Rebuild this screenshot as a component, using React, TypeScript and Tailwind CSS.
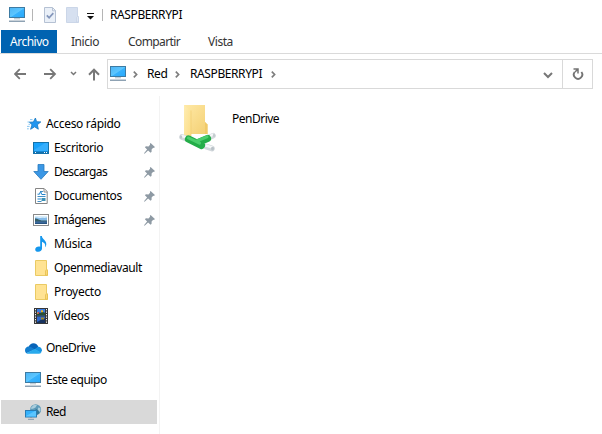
import type { ReactNode } from "react";

function Monitor() {
  return (
    <svg width="17" height="16" viewBox="0 0 17 16" className="shrink-0">
      <defs>
        <linearGradient id="screen" x1="0" y1="0" x2="1" y2="1">
          <stop offset="0" stopColor="#4cb4f5" />
          <stop offset="0.5" stopColor="#5cc6ff" />
          <stop offset="0.55" stopColor="#38b2fd" />
          <stop offset="1" stopColor="#27a9fc" />
        </linearGradient>
      </defs>
      <rect x="0.5" y="0.5" width="15" height="10" fill="url(#screen)" stroke="#3d7ba3" />
      <rect x="5" y="11.3" width="6" height="1" fill="#a9b9c6" />
      <rect x="0" y="13" width="16" height="1" fill="#c9d2da" />
      <rect x="0" y="14" width="16" height="1" fill="#8ea2b3" />
    </svg>
  );
}

function Star() {
  return (
    <svg width="15" height="14" viewBox="0 0 15 14" className="ml-[2px]">
      <path d="M8.4 1 9.6 4.7l4.2.2-3.4 2.8.9 4.5-3.7-2.4-4 2.5 1.4-4.6-2.6-2.5 4-.2z" fill="#2196f0" stroke="#1879c0" strokeWidth="0.8" />
      <path d="M3 2.6h2.5M0.5 5h2M1.5 7.3h1.6M0 9.4h2.6M0 11.8h1.8" stroke="#68b8ed" strokeWidth="0.8" />
    </svg>
  );
}

function Desktop() {
  return (
    <svg width="16" height="12" viewBox="0 0 16 12">
      <rect x="0.5" y="0.5" width="15" height="11" fill="#18a2fb" stroke="#1472ab" />
      <path d="M1 8 12 1h3v8H1z" fill="#35aefd" />
      <rect x="1" y="9.5" width="14" height="1.5" fill="#126fac" />
      <path d="M2 10.5h1M11 10.5h1M13 10.5h1" stroke="#fff" />
    </svg>
  );
}

function Download() {
  return (
    <svg width="16" height="16" viewBox="0 0 16 16">
      <path d="M5 .5h6v7h4.2L8 15.3.8 7.5H5z" fill="#3b97e5" stroke="#2778bd" strokeWidth="0.8" />
    </svg>
  );
}

function Doc() {
  return (
    <svg width="13" height="16" viewBox="0 0 13 16">
      <path d="M.5.5h8.7l3 3v12H.5z" fill="#fff" stroke="#858585" />
      <path d="M9 1v3h3" fill="none" stroke="#858585" strokeWidth="0.9" />
      <path d="M5 3.5h3M2.5 8.5h8M2.5 13.5h4" stroke="#438fc5" />
      <path d="M2.5 6.2h2l.6-2h1l.5 2.3M7 6.5h3.5M2.5 11h3.5" fill="none" stroke="#2385cd" />
      <rect x="6.5" y="10" width="4" height="3" fill="#3c91b6" />
    </svg>
  );
}

function Picture() {
  return (
    <svg width="16" height="12" viewBox="0 0 16 12">
      <rect x="0.5" y="0.5" width="15" height="11" fill="#fff" stroke="#8a8a8a" />
      <rect x="2" y="2" width="12" height="8" fill="#86bce9" />
      <path d="M2 3.4c3 0 4 1 6 .6s3 .2 6-.4V2H2z" fill="#d8edfa" />
      <path d="M2 4.5c2-.4 4.4 1.7 6.5 1.9l5.5.2V8H2z" fill="#355d67" />
      <path d="M2 7.5h12V10H2z" fill="#416fa8" />
      <path d="M2 9c3-1 6 .6 12-.6V10H2z" fill="#28537f" />
    </svg>
  );
}

function Music() {
  return (
    <svg width="12" height="16" viewBox="0 0 12 16">
      <path d="M5.2 0h1.7c.1 3.3 4.6 4.2 4.4 8.2-.1 1.3-.6 2.4-1.3 3.1.8-2.8-.3-4.4-3-5.5v6.7C7 14.4 5.5 15.8 3.3 15.8c-2 0-3.1-1-3.1-2.4 0-1.8 1.7-3 3.7-3 .5 0 .9.1 1.3.3z" fill="#1597ed" />
    </svg>
  );
}

function Folder() {
  return (
    <svg width="13" height="16" viewBox="0 0 13 16">
      <path d="M.5.5h11v9.3h1v5.7H.5z" fill="#ffe393" stroke="#eaca63" />
      <path d="M10.5 15.2v-4.4l1-1 1 1v4.4z" fill="#fbd87a" stroke="#e5bf4e" strokeWidth="0.8" />
    </svg>
  );
}

function Film() {
  return (
    <svg width="14" height="16" viewBox="0 0 14 16">
      <rect width="14" height="16" fill="#37383a" />
      <rect x="3" y="1" width="8" height="6.5" fill="#397ce0" />
      <rect x="3" y="8.5" width="8" height="6.5" fill="#2f68ca" />
      <path d="M3 5.8c2.5-2 3.5 0 5-2l3 1v2.7H3z" fill="#294e35" />
      <path d="M7 2.2h2v2H7zM3 4.5h2v1.2H3z" fill="#edb325" />
      <path d="M4 4h1v2H4z" fill="#ce405c" />
      <path d="M3 14c3-1 4-3 8-3.5V15H3z" fill="#17325e" />
      <path d="M7 9.5h3v2H7z" fill="#a48b2e" />
      <path d="M1.5 1v15M12.5 1v15" stroke="#f4f4f4" strokeDasharray="1.3 1.2" />
    </svg>
  );
}

function Cloud() {
  return (
    <svg width="17" height="11" viewBox="0 0 17 11">
      <path d="M3.6 4C4.6 1.4 6.3.2 8.4.2c2.4 0 4.3 1.5 5 3.7L9 7.5z" fill="#0864b8" />
      <path d="M3.7 3.5C1.5 3.6 0 5.2 0 7.3c0 1.3.6 2.3 1.4 3L10 6.5 6.4 4.3c-.8-.5-1.7-.8-2.7-.8z" fill="#137dce" />
      <path d="M9.5 6.2 13 3.8c2.3 0 4 1.6 4 3.6L15.8 10z" fill="#1591df" />
      <path d="M1.3 10.2 9.6 6.1l6.8 3.5c-.6.8-1.5 1.2-2.6 1.2H3.6c-.9 0-1.7-.2-2.3-.6z" fill="#28aaed" />
    </svg>
  );
}

function Network() {
  return (
    <svg width="17" height="16" viewBox="0 0 17 16">
      <circle cx="10.6" cy="5.7" r="5.5" fill="#5d9ab8" />
      <path d="M6.2 3.4 9 .8l3 .2-1.5 2.4-2.6 1.3H6zM13.2 3.5l2 .5.4 2.5-1.6 1.4-1.4-1.4z" fill="#a9cddc" />
      <path d="m10.5 4.6 3 2 1 2.4-1.6 1.5h-2z" fill="#357897" />
      <rect x="0.5" y="6.5" width="11" height="6.5" fill="#34b1fb" stroke="#297bb2" />
      <path d="M1 12 10 7h1v5.5H1z" fill="#5bc5ff" />
      <path d="M5 13.5h2M3 15.3h6" stroke="#8198aa" />
    </svg>
  );
}

function Pin() {
  return (
    <svg width="11" height="11" viewBox="0 0 11 11" className="absolute left-[144px] top-[7px]">
      <path d="M6.6 0 10.9 4.1 10 5l-.8-.2L7.6 6.4v2.4l-1 1L4.1 7.4.6 10.7 0 10.3l3.1-3.9L.9 4.2l1-1 2.6.2L6.1 1.8 5.9.8z" fill="#8e9aa4" />
    </svg>
  );
}

function Crumb() {
  return (
    <svg width="5" height="7" viewBox="0 0 5 7" className="shrink-0">
      <path d="m.8.7 2.8 2.8L.8 6.3" fill="none" stroke="#7d7d7d" strokeWidth="1.7" />
    </svg>
  );
}

function Drive() {
  return (
    <svg width="38" height="48" viewBox="0 0 38 48">
      <defs>
        <linearGradient id="folderFront" x1="0" y1="0" x2="1" y2="1">
          <stop stopColor="#ffedb2" />
          <stop offset="1" stopColor="#fbdc84" />
        </linearGradient>
        <linearGradient id="folderBack" x1="0" y1="0" x2="1" y2="1">
          <stop stopColor="#ffe9a6" />
          <stop offset="1" stopColor="#f3cf72" />
        </linearGradient>
      </defs>
      <path d="M5 1h21v17l2.5 2.5V30H5z" fill="url(#folderBack)" />
      <path d="M26 18v12h2.5v-9.5z" fill="#f0c968" />
      <path d="m5 1 7 5.5V35l-7-4z" fill="url(#folderFront)" />
      <path d="M12 6.5V32" stroke="#efcb70" strokeWidth="0.7" />
      <path d="m3 33 5 1.8M29 34l5-2.3M27 42.5l6 2" stroke="#d3d8dc" strokeWidth="5.6" strokeLinecap="round" />
      <path d="m3 32 5 1.6M29 33l5-2.3M27 41.5l6 1.8" stroke="#f5f7f8" strokeWidth="2.4" strokeLinecap="round" />
      <path d="m9.500 35 13 6.500M19 38.500 28.500 34.500" stroke="#24ad49" strokeWidth="7.2" fill="none" strokeLinecap="round" />
      <path d="m9.500 34 11 5.200M18 36.800 28 32.800" stroke="#4bce6d" strokeWidth="3" fill="none" strokeLinecap="round" />
      <ellipse cx="2" cy="33" rx="1.2" ry="1.8" fill="#bfc7cb" />
      <ellipse cx="35" cy="31.500" rx="1.2" ry="1.800" fill="#c5ccd0" />
      <ellipse cx="33.500" cy="44.600" rx="1.500" ry="1.900" fill="#b9c2c7" />
    </svg>
  );
}

type RowProps = { icon: ReactNode; label: string; text: string; child?: boolean; pinned?: boolean };

function Row({ icon, label, text, child, pinned }: RowProps) {
  return (
    <div className={`relative flex h-6 items-center ${child ? "pl-8" : "pl-6"}`}>
      <span className="flex w-[18px] shrink-0 justify-center">{icon}</span>
      <span className={`ml-1 whitespace-nowrap ${text}`}>{label}</span>
      {pinned && <Pin />}
    </div>
  );
}

export default function App() {
  return (
    <div className="flex h-[434px] w-[602px] flex-col overflow-hidden bg-white font-['Noto_Sans','Open_Sans',sans-serif] text-[12px] leading-4 text-black">
      <header className="flex h-[30px] shrink-0 items-center pl-[9px]">
        <Monitor />
        <i className="ml-[6px] h-3 w-px bg-[#b5b5b5]" />
        <svg width="12" height="16" viewBox="0 0 12 16" className="ml-[11px]">
          <path d="M.5.5h8l3 3v12H.5z" fill="#eaf0f8" stroke="#b5c1d3" />
          <path d="M8.5.8v3h3" fill="none" stroke="#b5c1d3" />
          <path d="m2.8 8.3 2.3 2.4 4.2-4.6" fill="none" stroke="#8395ba" strokeWidth="1.7" />
        </svg>
        <svg width="13" height="16" viewBox="0 0 13 16" className="ml-[10px]">
          <path d="M.5.5h11v9h1v6H.5z" fill="#d6e0f0" stroke="#cbd6e8" />
          <path d="M10.5 15v-4.5l1-1 1 1V15z" fill="#dfe7f3" stroke="#c5d1e5" strokeWidth=".7" />
        </svg>
        <svg width="7" height="7" viewBox="0 0 7 7" className="mt-[2px] ml-2">
          <path d="M0 0h7v1H0zM0 3h7L3.500 6.500z" fill="#111" />
        </svg>
        <i className="ml-2 h-3 w-px bg-[#b5b5b5]" />
        <span className="ml-[7px] tracking-[-0.4px]">RASPBERRYPI</span>
      </header>

      <nav className="flex h-6 shrink-0 border-b border-[#dadada] pl-px leading-6 text-[#333]">
        <span className="h-[23px] w-14 bg-[#0063b1] pl-[9px] tracking-[-0.5px] text-white">Archivo</span>
        <span className="w-[57px] pl-[14px] tracking-[-0.45px]">Inicio</span>
        <span className="w-20 pl-[14px] tracking-[-0.6px]">Compartir</span>
        <span className="pl-[14px] tracking-[-0.45px]">Vista</span>
      </nav>

      <div className="mt-[5px] flex h-[30px] shrink-0 items-center">
        <svg width="93" height="16" viewBox="0 0 93 16" className="ml-[14px] shrink-0" fill="none" stroke="#777">
          <path d="M12 8H1M5.8 3.2 1 8l4.8 4.8M30 8h11M36.2 3.2 41 8l-4.8 4.8" strokeWidth="1.8" />
          <path d="m57 6 2.5 2.5L62 6" strokeWidth="1.5" />
          <path d="M80 14.5V4M75 8.8 80 3.7l5 5.1" strokeWidth="2" />
        </svg>
        <div className="flex h-[30px] w-[486px] border border-[#d9d9d9]">
          <div className="flex w-[455px] items-center border-r border-[#d9d9d9] pl-[2px]">
            <Monitor />
            <i className="w-[6px]" />
            <Crumb />
            <span className="ml-[9px] w-7 tracking-[-0.4px]">Red</span>
            <Crumb />
            <span className="ml-[10px] w-[81px] tracking-[-0.4px]">RASPBERRYPI</span>
            <Crumb />
            <svg width="10" height="7" viewBox="0 0 10 7" className="mt-[2px] mr-[9px] ml-auto">
              <path d="m1 1 4 4 4-4" fill="none" stroke="#777" strokeWidth="2" />
            </svg>
          </div>
          <div className="flex flex-1 items-center justify-center">
            <svg width="12" height="12" viewBox="0 0 12 12" fill="none" stroke="#737373">
              <path d="M2.700 4A4.200 4.200 0 1 0 9.400 4" strokeWidth="1.900" />
              <path d="M1.500 1H6v4.500M6 1 3 4" strokeWidth="1.500" />
            </svg>
          </div>
        </div>
      </div>

      <main className="mt-[7px] flex flex-1">
        <aside className="w-40 shrink-0 border-r border-[#f3f3f3] pt-4">
          <Row icon={<Star />} label="Acceso rápido" text="tracking-[-0.32px]" />
          <Row child icon={<Desktop />} label="Escritorio" text="tracking-[-0.4px]" pinned />
          <Row child icon={<Download />} label="Descargas" text="tracking-[-0.6px]" pinned />
          <Row child icon={<Doc />} label="Documentos" text="tracking-[-0.42px]" pinned />
          <Row child icon={<Picture />} label="Imágenes" text="tracking-[-0.62px]" pinned />
          <Row child icon={<Music />} label="Música" text="tracking-[-0.3px]" />
          <Row child icon={<Folder />} label="Openmediavault" text="tracking-[-0.43px]" />
          <Row child icon={<Folder />} label="Proyecto" text="tracking-[-0.3px]" />
          <Row child icon={<Film />} label="Vídeos" text="tracking-[-0.4px]" />
          <div className="mt-2"><Row icon={<Cloud />} label="OneDrive" text="tracking-[-0.5px]" /></div>
          <div className="mt-2"><Row icon={<Monitor />} label="Este equipo" text="tracking-[-0.48px]" /></div>
          <div className="mt-2 mr-[2px] ml-px bg-[#d9d9d9]"><div className="-ml-px"><Row icon={<Network />} label="Red" text="tracking-[-0.6px]" /></div></div>
        </aside>
        <section className="flex items-start pt-2 pl-[19px]">
          <Drive />
          <span className="mt-[7px] ml-[15px] tracking-[-0.5px]">PenDrive</span>
        </section>
      </main>
    </div>
  );
}
